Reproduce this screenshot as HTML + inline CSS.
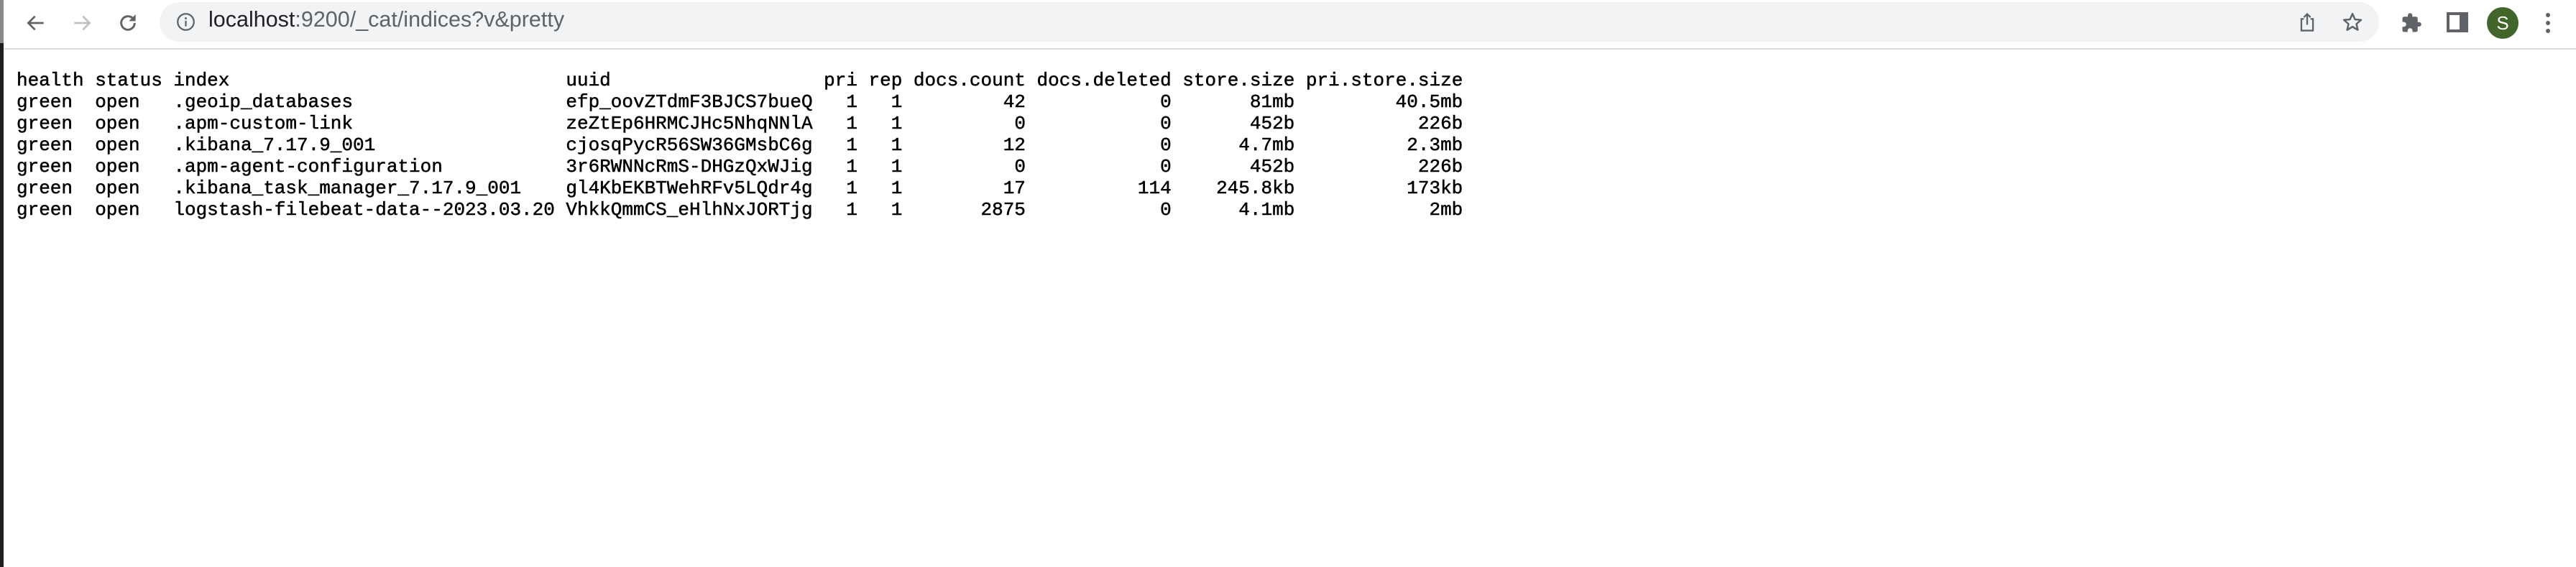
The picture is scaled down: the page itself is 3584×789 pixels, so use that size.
<!DOCTYPE html>
<html><head><meta charset="utf-8"><style>
html,body{margin:0;padding:0;width:3584px;height:789px;overflow:hidden;background:#fff;}
.lb{position:absolute;left:0;top:0;width:5px;height:789px;background:#1e1e1e;}
.lb2{position:absolute;left:0;top:0;width:5px;height:60px;background:#8a8a8a;}
.bar{position:absolute;left:5px;top:0;right:0;height:67px;background:#fff;border-bottom:2px solid #dadce0;}
.omni{position:absolute;left:222px;top:3px;width:3088px;height:55px;background:#f1f3f4;border-radius:28px;}
.url{position:absolute;left:290px;top:10px;font:30.5px "Liberation Sans",sans-serif;color:#202124;white-space:nowrap;}
.url span{color:#5f6368}
svg{position:absolute}
pre{position:absolute;left:23px;top:97px;margin:0;font:26px/30px "Liberation Mono",monospace;color:#000;-webkit-text-stroke:0.5px #000;}
.r span{display:inline-block;margin-right:15.6px;white-space:pre}
.l6{width:93.6px}.l34{width:530.4px}.l22{width:343.2px}
.n3{width:46.8px;text-align:right}.n10{width:156px;text-align:right}.n12{width:187.2px;text-align:right}.n14{width:218.4px;text-align:right}
</style></head><body>
<div class="lb"></div><div class="lb2"></div>
<div class="bar"></div>
<svg style="left:34px;top:16px" width="32" height="32" viewBox="0 0 24 24"><path d="M20 12H5M11 5l-7 7 7 7" fill="none" stroke="#5f6368" stroke-width="2"/></svg>
<svg style="left:98px;top:16px" width="32" height="32" viewBox="0 0 24 24"><path d="M4 12h15M13 5l7 7-7 7" fill="none" stroke="#bdc1c6" stroke-width="2"/></svg>
<svg style="left:162px;top:16px" width="32" height="32" viewBox="0 0 24 24"><path d="M19 12a7 7 0 1 1-2.1-5" fill="none" stroke="#5f6368" stroke-width="2.2"/><path d="M20 3v7h-7z" fill="#5f6368"/></svg>
<div class="omni"></div>
<svg style="left:245px;top:17px" width="27" height="27" viewBox="0 0 24 24"><circle cx="12" cy="12" r="10" fill="none" stroke="#5f6368" stroke-width="2"/><rect x="11" y="10.5" width="2" height="7" fill="#5f6368"/><circle cx="12" cy="7.5" r="1.3" fill="#5f6368"/></svg>
<div class="url">localhost<span>:9200/_cat/indices?v&amp;pretty</span></div>
<svg style="left:3196px;top:16px" width="28" height="30" viewBox="0 0 24 26"><path d="M8 9H5v14h14V9h-3M12 16V3M8 7l4-4 4 4" fill="none" stroke="#5f6368" stroke-width="2"/></svg>
<svg style="left:3258px;top:16px" width="30" height="30" viewBox="0 0 24 24"><path d="M12 2.5l2.8 6.3 6.7.6-5.1 4.5 1.5 6.6L12 17l-5.9 3.5 1.5-6.6-5.1-4.5 6.7-.6z" fill="none" stroke="#5f6368" stroke-width="2" stroke-linejoin="round"/></svg>
<svg style="left:3340px;top:17px" width="30" height="30" viewBox="0 0 24 24"><path d="M20.5 11H19V7c0-1.1-.9-2-2-2h-4V3.5a2.5 2.5 0 0 0-5 0V5H4c-1.1 0-2 .9-2 2v3.8h1.5a2.7 2.7 0 0 1 0 5.4H2V20c0 1.1.9 2 2 2h3.8v-1.5a2.7 2.7 0 0 1 5.4 0V22H17c1.1 0 2-.9 2-2v-4h1.5a2.5 2.5 0 0 0 0-5z" fill="#5f6368"/></svg>
<svg style="left:3404px;top:17px" width="30" height="28" viewBox="0 0 30 28"><rect x="0" y="0" width="30" height="28" fill="#5f6368"/><rect x="4" y="4" width="14" height="20" fill="#fff"/></svg>
<div style="position:absolute;left:3460px;top:10px;width:44px;height:44px;border-radius:50%;background:#42652b;color:#fff;font:26px 'Liberation Sans',sans-serif;text-align:center;line-height:44px">S</div>
<svg style="left:3538px;top:16px" width="14" height="34" viewBox="0 0 14 34"><circle cx="7" cy="5" r="3" fill="#5f6368"/><circle cx="7" cy="16" r="3" fill="#5f6368"/><circle cx="7" cy="27" r="3" fill="#5f6368"/></svg>
<pre><div class="r"><span class="l6">health</span><span class="l6">status</span><span class="l34">index</span><span class="l22">uuid</span><span class="n3">pri</span><span class="n3">rep</span><span class="n10">docs.count</span><span class="n12">docs.deleted</span><span class="n10">store.size</span><span class="n14">pri.store.size</span></div><div class="r"><span class="l6">green</span><span class="l6">open</span><span class="l34">.geoip_databases</span><span class="l22">efp_oovZTdmF3BJCS7bueQ</span><span class="n3">1</span><span class="n3">1</span><span class="n10">42</span><span class="n12">0</span><span class="n10">81mb</span><span class="n14">40.5mb</span></div><div class="r"><span class="l6">green</span><span class="l6">open</span><span class="l34">.apm-custom-link</span><span class="l22">zeZtEp6HRMCJHc5NhqNNlA</span><span class="n3">1</span><span class="n3">1</span><span class="n10">0</span><span class="n12">0</span><span class="n10">452b</span><span class="n14">226b</span></div><div class="r"><span class="l6">green</span><span class="l6">open</span><span class="l34">.kibana_7.17.9_001</span><span class="l22">cjosqPycR56SW36GMsbC6g</span><span class="n3">1</span><span class="n3">1</span><span class="n10">12</span><span class="n12">0</span><span class="n10">4.7mb</span><span class="n14">2.3mb</span></div><div class="r"><span class="l6">green</span><span class="l6">open</span><span class="l34">.apm-agent-configuration</span><span class="l22">3r6RWNNcRmS-DHGzQxWJig</span><span class="n3">1</span><span class="n3">1</span><span class="n10">0</span><span class="n12">0</span><span class="n10">452b</span><span class="n14">226b</span></div><div class="r"><span class="l6">green</span><span class="l6">open</span><span class="l34">.kibana_task_manager_7.17.9_001</span><span class="l22">gl4KbEKBTWehRFv5LQdr4g</span><span class="n3">1</span><span class="n3">1</span><span class="n10">17</span><span class="n12">114</span><span class="n10">245.8kb</span><span class="n14">173kb</span></div><div class="r"><span class="l6">green</span><span class="l6">open</span><span class="l34">logstash-filebeat-data--2023.03.20</span><span class="l22">VhkkQmmCS_eHlhNxJORTjg</span><span class="n3">1</span><span class="n3">1</span><span class="n10">2875</span><span class="n12">0</span><span class="n10">4.1mb</span><span class="n14">2mb</span></div></pre>
</body></html>
